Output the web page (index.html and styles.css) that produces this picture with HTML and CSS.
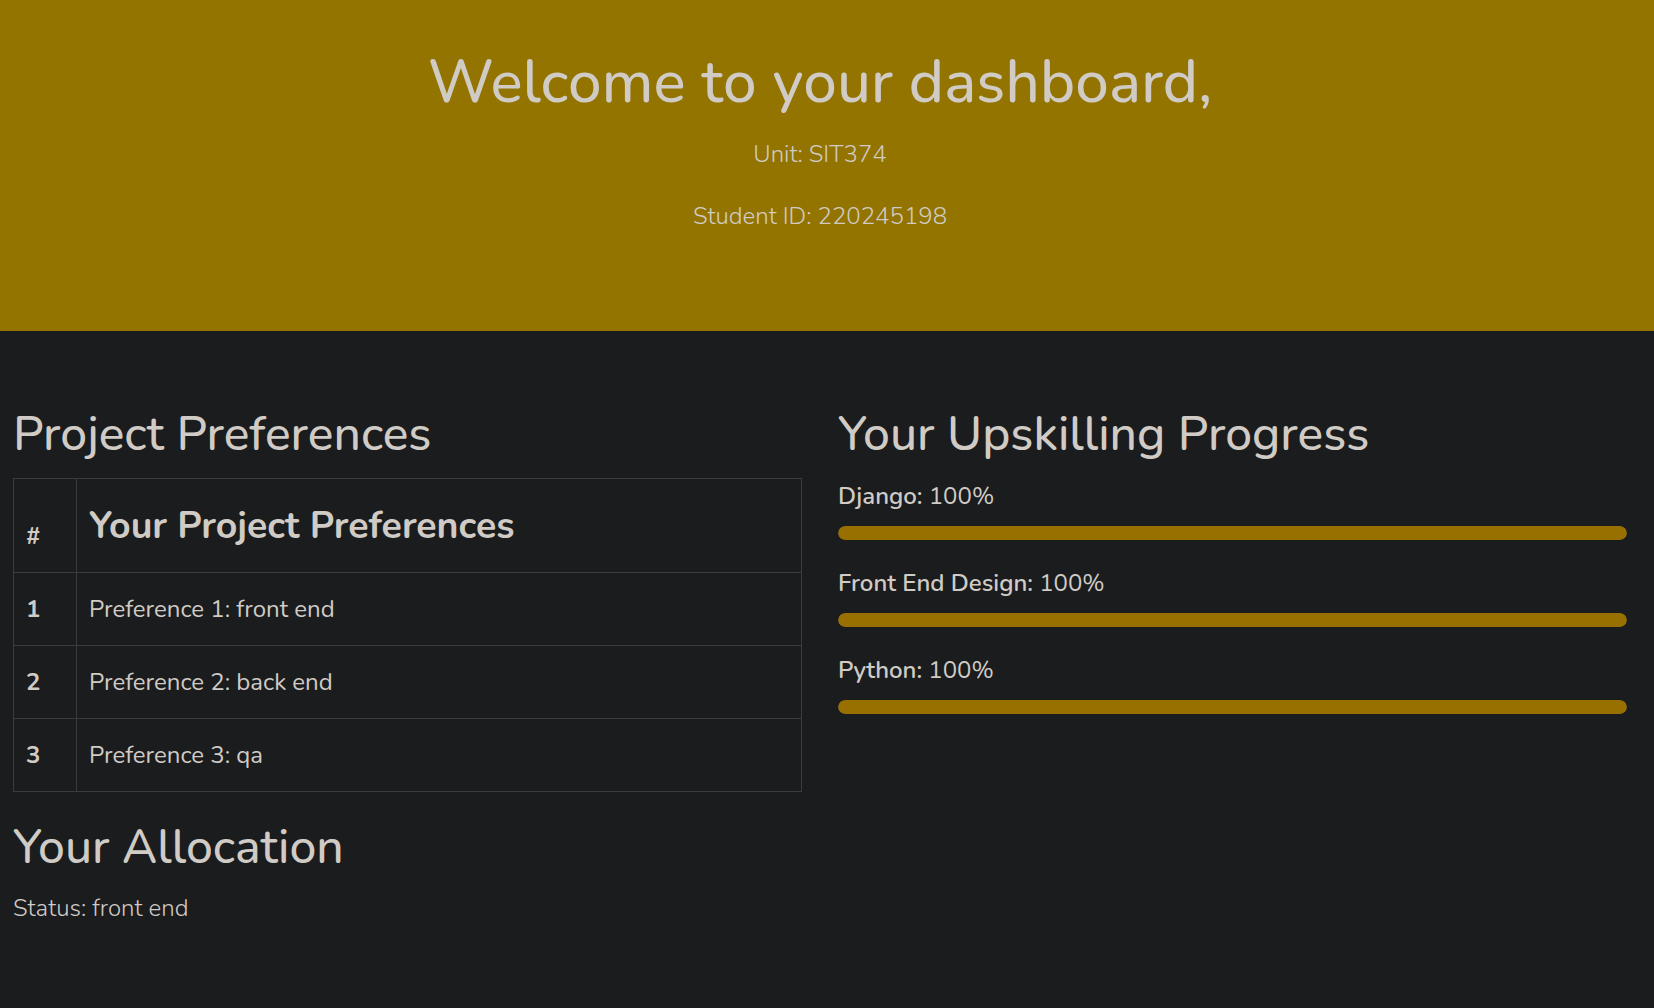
FILE: index.html
```html
<!DOCTYPE html>
<html lang="en">
<head>
<meta charset="utf-8">
<title>Dashboard</title>
<link rel="stylesheet" href="styles.css">
</head>
<body>
<header class="hero">
  <h1 class="hero-title">Welcome to your dashboard,</h1>
  <p class="hero-line">Unit: SIT374</p>
  <p class="hero-line">Student ID: 220245198</p>
</header>
<main class="content">
  <section class="col">
    <h2 class="section-title">Project Preferences</h2>
    <table class="pref-table">
      <thead>
        <tr>
          <th class="num-cell">#</th>
          <th class="title-cell"><h3 class="table-title">Your Project Preferences</h3></th>
        </tr>
      </thead>
      <tbody>
        <tr><th class="num-cell">1</th><td>Preference 1: front end</td></tr>
        <tr><th class="num-cell">2</th><td>Preference 2: back end</td></tr>
        <tr><th class="num-cell">3</th><td>Preference 3: qa</td></tr>
      </tbody>
    </table>
    <h2 class="section-title">Your Allocation</h2>
    <p class="text">Status: front end</p>
  </section>
  <section class="col">
    <h2 class="section-title">Your Upskilling Progress</h2>
    <div class="skill">
      <p class="skill-label"><strong>Django:</strong> 100%</p>
      <div class="bar"><div class="bar-fill" style="width:100%"></div></div>
    </div>
    <div class="skill">
      <p class="skill-label"><strong>Front End Design:</strong> 100%</p>
      <div class="bar"><div class="bar-fill" style="width:100%"></div></div>
    </div>
    <div class="skill">
      <p class="skill-label"><strong>Python:</strong> 100%</p>
      <div class="bar"><div class="bar-fill" style="width:100%"></div></div>
    </div>
  </section>
</main>
</body>
</html>
```
FILE: styles.css
```css
* { box-sizing: border-box; }
html, body { margin: 0; padding: 0; }
body {
  background: #1b1c1e;
  color: #d0cbc5;
  font-family: "Nunito", "Lato", "Open Sans", sans-serif;
  font-size: 24px;
  line-height: 1.5;
  min-height: 1008px;
}
.hero {
  background: #937400;
  text-align: center;
  padding: 46px 14px 73px 0;
  height: 331px;
}
.hero-title {
  margin: 0 0 18px;
  font-size: 60px;
  font-weight: 500;
  line-height: 1.2;
  letter-spacing: 0.15px;
}
.hero-line {
  margin: 0 0 26px;
  font-weight: 300;
}
.content {
  display: flex;
  gap: 36px;
  padding: 75px 27px 0 13px;
}
.col { flex: 1 1 0; min-width: 0; }
.section-title {
  margin: 0 0 14px;
  font-size: 48px;
  font-weight: 500;
  line-height: 1.2;
}
.pref-table {
  width: 100%;
  border-collapse: collapse;
  margin-bottom: 27px;
}
.pref-table th, .pref-table td {
  border: 1px solid #3a3c3f;
  padding: 18px 12px;
  text-align: left;
}
.pref-table thead th { vertical-align: bottom; }
.pref-table thead .title-cell { padding-top: 24px; }
.pref-table td { font-weight: 400; }
.num-cell { width: 63px; font-weight: 700; }
.table-title {
  margin: 0 0 6px;
  font-size: 37.5px;
  font-weight: 700;
  line-height: 1.2;
}
.text { margin: 0; font-weight: 300; }
.skill-label { margin: 0 0 12px; }
.skill-label strong { font-weight: 600; }
.bar {
  height: 14px;
  border-radius: 7px;
  background: #2a2b2e;
  margin-bottom: 25px;
  overflow: hidden;
}
.bar-fill { height: 100%; background: #977000; border-radius: 7px; }
```
